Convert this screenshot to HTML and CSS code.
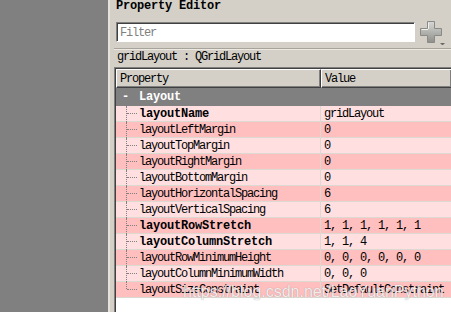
FILE: index.html
```html
<!DOCTYPE html>
<html lang="en">
<head>
    <meta charset="UTF-8">
    <title>Property Editor</title>
    <link rel="stylesheet" href="styles.css">
</head>
<body>
    <div class="screen">
        <div class="backdrop"></div>
        <div class="panel">
            <div class="panel-title">Property Editor</div>
            <div class="filter-row">
                <input class="filter-input" type="text" placeholder="Filter">
                <div class="add-btn">
                    <svg width="26" height="24" viewBox="0 0 26 24">
                        <defs>
                            <linearGradient id="plusFill" x1="0" y1="0" x2="0" y2="1">
                                <stop offset="0" stop-color="#d8d8d6"/>
                                <stop offset="1" stop-color="#8e8e8a"/>
                            </linearGradient>
                        </defs>
                        <path d="M7.5 0.5h7v7h7v7h-7v7h-7v-7h-7v-7h7z" fill="url(#plusFill)" stroke="#8a8a86"/>
                        <path d="M8.5 1.5v6.5M1.5 8.5h6.5" stroke="#f2f2f0" fill="none"/>
                        <path d="M20 22h5l-2.5 2.5z" fill="#6a6a66"/>
                    </svg>
                </div>
            </div>
            <div class="object-label">gridLayout : QGridLayout</div>
            <div class="tree">
                <div class="tree-head">
                    <div class="head-cell head-prop">Property</div>
                    <div class="head-cell head-value">Value</div>
                </div>
                <div class="group-row">
                    <span class="group-toggle">-</span>
                    <span class="group-name">Layout</span>
                </div>
                <div class="prop-row row-light">
                    <div class="prop-name is-bold"><span class="branch"></span>layoutName</div>
                    <div class="prop-value">gridLayout</div>
                </div>
                <div class="prop-row row-dark">
                    <div class="prop-name"><span class="branch"></span>layoutLeftMargin</div>
                    <div class="prop-value">0</div>
                </div>
                <div class="prop-row row-light">
                    <div class="prop-name"><span class="branch"></span>layoutTopMargin</div>
                    <div class="prop-value">0</div>
                </div>
                <div class="prop-row row-dark">
                    <div class="prop-name"><span class="branch"></span>layoutRightMargin</div>
                    <div class="prop-value">0</div>
                </div>
                <div class="prop-row row-light">
                    <div class="prop-name"><span class="branch"></span>layoutBottomMargin</div>
                    <div class="prop-value">0</div>
                </div>
                <div class="prop-row row-dark">
                    <div class="prop-name"><span class="branch"></span>layoutHorizontalSpacing</div>
                    <div class="prop-value">6</div>
                </div>
                <div class="prop-row row-light">
                    <div class="prop-name"><span class="branch"></span>layoutVerticalSpacing</div>
                    <div class="prop-value">6</div>
                </div>
                <div class="prop-row row-dark">
                    <div class="prop-name is-bold"><span class="branch"></span>layoutRowStretch</div>
                    <div class="prop-value">1, 1, 1, 1, 1, 1</div>
                </div>
                <div class="prop-row row-light">
                    <div class="prop-name is-bold"><span class="branch"></span>layoutColumnStretch</div>
                    <div class="prop-value">1, 1, 4</div>
                </div>
                <div class="prop-row row-dark">
                    <div class="prop-name"><span class="branch"></span>layoutRowMinimumHeight</div>
                    <div class="prop-value">0, 0, 0, 0, 0, 0</div>
                </div>
                <div class="prop-row row-light">
                    <div class="prop-name"><span class="branch"></span>layoutColumnMinimumWidth</div>
                    <div class="prop-value">0, 0, 0</div>
                </div>
                <div class="prop-row row-dark">
                    <div class="prop-name"><span class="branch branch-last"></span>layoutSizeConstraint</div>
                    <div class="prop-value">SetDefaultConstraint</div>
                </div>
            </div>
        </div>
        <div class="watermark">https://blog.csdn.net/LaoYuanPython</div>
    </div>
</body>
</html>
```

FILE: styles.css
```css
body {
    margin: 0;
    padding: 0;
    background-color: #808080;
    font-family: 'Liberation Mono', 'DejaVu Sans Mono', monospace;
    font-size: 12px;
    letter-spacing: -1.2px;
    color: #000;
}

.screen {
    position: relative;
    display: flex;
    width: 451px;
    height: 312px;
    overflow: hidden;
}

.backdrop {
    width: 108px;
    background-color: #808080;
}

.panel {
    flex: 1;
    display: flex;
    flex-direction: column;
    background-color: #d4d0c8;
    border-left: 2px solid #e6e3dc;
    padding-left: 4px;
    box-sizing: border-box;
}

.panel-title {
    height: 22px;
    line-height: 13px;
    padding-left: 2px;
    font-weight: bold;
    letter-spacing: -0.2px;
}

.filter-row {
    display: flex;
    align-items: flex-start;
    height: 26px;
    padding-left: 2px;
}

.filter-input {
    width: 299px;
    height: 20px;
    margin: 0;
    padding: 1px 3px 0;
    box-sizing: border-box;
    border: 1px solid;
    border-color: #808080 #ffffff #ffffff #808080;
    box-shadow: inset 1px 1px 0 #404040;
    background-color: #fff;
    font-family: inherit;
    font-size: 12px;
    letter-spacing: -1.2px;
    outline: none;
}

.filter-input::placeholder {
    color: #808080;
}

.add-btn {
    margin-left: 5px;
    margin-top: -1px;
    width: 26px;
    height: 24px;
}

.object-label {
    height: 17px;
    line-height: 17px;
    padding-left: 3px;
    border-top: 1px solid #a8a49c;
    box-shadow: inset 0 1px 0 #ece9e2;
    box-sizing: border-box;
    margin-bottom: 2px;
}

.tree {
    flex: 1;
    background-color: #fff;
    border-top: 1px solid #808080;
    border-left: 1px solid #808080;
    box-shadow: inset 1px 1px 0 #404040;
    padding: 1px 0 0 1px;
    overflow: hidden;
}

.tree-head {
    display: flex;
    height: 19px;
}

.head-cell {
    background-color: #d4d0c8;
    border-top: 1px solid #fff;
    border-left: 1px solid #fff;
    border-bottom: 1px solid #404040;
    box-shadow: inset -1px -1px 0 #808080;
    box-sizing: border-box;
    line-height: 18px;
    padding-left: 3px;
}

.head-prop {
    width: 205px;
    border-right: 1px solid #404040;
}

.head-value {
    flex: 1;
    padding-left: 3px;
}

.group-row {
    display: flex;
    height: 18px;
    line-height: 19px;
    background-color: #808080;
    color: #fff;
    font-weight: bold;
    letter-spacing: -0.2px;
}

.group-toggle {
    width: 23px;
    padding-left: 6px;
    box-sizing: border-box;
}

.prop-row {
    display: flex;
    height: 16px;
    padding-top: 2px;
    line-height: 13px;
    border-bottom: 1px solid #dcd8d2;
    box-sizing: border-box;
}

.row-light {
    background-color: #ffdfdf;
}

.row-dark {
    background-color: #ffbfbf;
}

.prop-name {
    position: relative;
    width: 205px;
    padding-left: 23px;
    box-sizing: border-box;
    border-right: 1px solid #dcd8d2;
    margin-top: -2px;
    padding-top: 2px;
    white-space: nowrap;
}

.prop-name.is-bold {
    font-weight: bold;
    letter-spacing: -0.2px;
}

.branch {
    position: absolute;
    left: 10px;
    top: 0;
    bottom: -1px;
    width: 11px;
    border-left: 1px dotted #808080;
}

.branch::after {
    content: "";
    position: absolute;
    left: 0;
    top: 7px;
    width: 10px;
    border-top: 1px dotted #808080;
}

.branch-last {
    bottom: 8px;
}

.prop-value {
    flex: 1;
    padding-left: 3px;
    white-space: nowrap;
}

.watermark {
    position: absolute;
    left: 183px;
    top: 283px;
    font-family: 'Liberation Sans', Arial, sans-serif;
    font-size: 16px;
    letter-spacing: 0;
    color: rgba(255, 255, 255, 0.85);
    text-shadow: 0 0 1px rgba(110, 110, 110, 0.7);
}
```
